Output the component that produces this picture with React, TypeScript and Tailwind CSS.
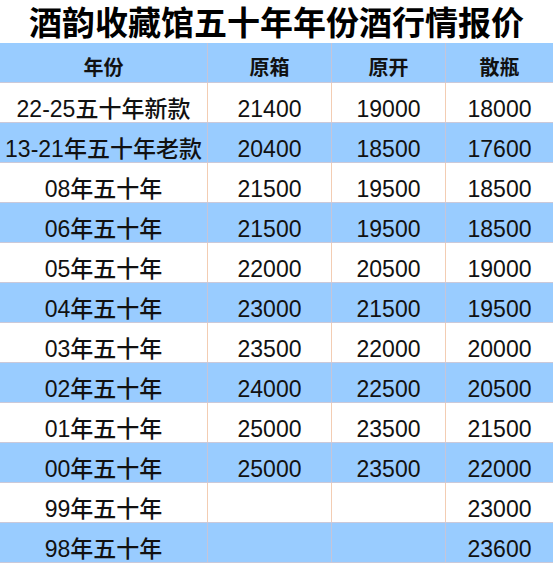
import React from 'react';

interface PriceRow {
  name: string;
  box: string;
  open: string;
  loose: string;
}

const rows: PriceRow[] = [
  { name: '22-25五十年新款', box: '21400', open: '19000', loose: '18000' },
  { name: '13-21年五十年老款', box: '20400', open: '18500', loose: '17600' },
  { name: '08年五十年', box: '21500', open: '19500', loose: '18500' },
  { name: '06年五十年', box: '21500', open: '19500', loose: '18500' },
  { name: '05年五十年', box: '22000', open: '20500', loose: '19000' },
  { name: '04年五十年', box: '23000', open: '21500', loose: '19500' },
  { name: '03年五十年', box: '23500', open: '22000', loose: '20000' },
  { name: '02年五十年', box: '24000', open: '22500', loose: '20500' },
  { name: '01年五十年', box: '25000', open: '23500', loose: '21500' },
  { name: '00年五十年', box: '25000', open: '23500', loose: '22000' },
  { name: '99年五十年', box: '', open: '', loose: '23000' },
  { name: '98年五十年', box: '', open: '', loose: '23600' },
];

function Row({ cells, blue, header }: { cells: string[]; blue: boolean; header?: boolean }) {
  const line = blue ? 'border-[#c6c5d9]' : 'border-[#f3cdb3]';
  const text = header
    ? 'text-[20px] font-bold leading-6 pb-[2px]'
    : 'text-[23px] font-medium leading-6 pb-px';
  return (
    <div
      className={`flex h-10 border-b border-b-[#cbc9d9] ${blue ? 'bg-[#99ccff]' : 'bg-white'}`}
    >
      <div className={`w-[208px] shrink-0 flex items-end justify-center whitespace-nowrap border-r ${line} ${text}`}>
        {cells[0]}
      </div>
      <div className={`w-[124px] shrink-0 flex items-end justify-center border-r ${line} ${text}`}>
        {cells[1]}
      </div>
      <div className={`w-[114px] shrink-0 flex items-end justify-center border-r ${line} ${text}`}>
        {cells[2]}
      </div>
      <div className={`flex-1 flex items-end justify-center ${text}`}>{cells[3]}</div>
    </div>
  );
}

export default function App() {
  return (
    <div className="w-[553px] h-[563px] overflow-hidden bg-white text-[#111] font-['Liberation_Sans','Noto_Sans_CJK_SC',sans-serif]">
      <div className="h-[43px] flex items-center justify-center pt-[3px] text-[33px] font-bold leading-none text-black whitespace-nowrap">
        酒韵收藏馆五十年年份酒行情报价
      </div>
      <Row cells={['年份', '原箱', '原开', '散瓶']} blue header />
      {rows.map((r, i) => (
        <Row key={r.name} cells={[r.name, r.box, r.open, r.loose]} blue={i % 2 === 1} />
      ))}
    </div>
  );
}
